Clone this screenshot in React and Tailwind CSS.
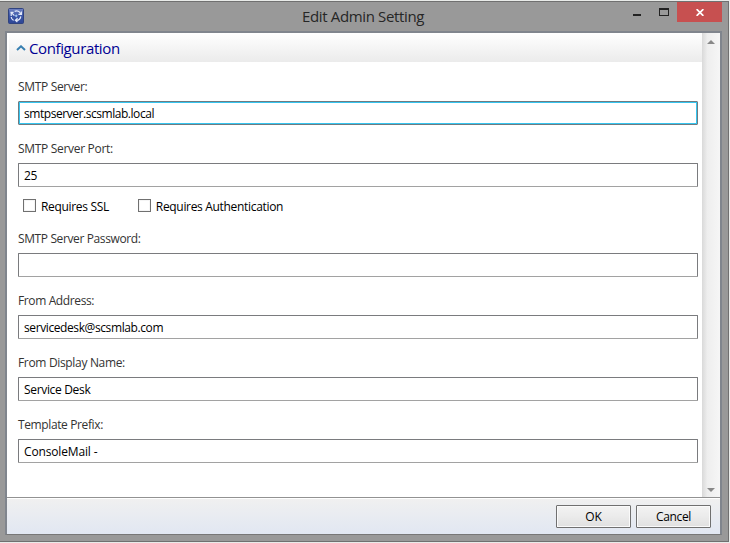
import React from "react";

function TextField({ label, value, focused, tracking = "", labelTracking = "" }) {
  return (
    <div className="h-[62px] pt-[16px]">
      <div className={`h-[23px] text-[12px] leading-[17px] text-[#333] ${labelTracking}`}>{label}</div>
      <div
        className={`flex h-[24px] items-center rounded-[1px] border bg-white pl-[5px] pt-px text-[12px] leading-[16px] text-black ${
          focused
            ? "border-[#6f7b80] shadow-[inset_0_0_0_1px_#35c5f0]"
            : "border-x-[#7a7b7e] border-t-[#7a7b7e] border-b-[#a2a2a2]"
        } ${tracking}`}
      >
        {value}
      </div>
    </div>
  );
}

function Checkbox({ label, tracking }) {
  return (
    <div className="flex items-start">
      <span className="h-[13px] w-[13px] border border-[#707070] bg-white shadow-[inset_0_0_0_1px_#f5f5f5]" />
      <span className={`ml-[5px] text-[12px] leading-[16px] text-black ${tracking}`}>{label}</span>
    </div>
  );
}

function Button({ children, tracking = "" }) {
  return (
    <div
      className={`flex h-[23px] w-[75px] items-center justify-center rounded-[1px] border border-[#707070] bg-linear-to-b from-[#f3f3f3] via-[#ebebeb] to-[#e0e0e0] text-[12px] leading-[16px] text-black shadow-[inset_0_0_0_1px_#fafafa] ${tracking}`}
    >
      {children}
    </div>
  );
}

function AppIcon() {
  return (
    <svg width="16" height="16" viewBox="0 0 16 16" className="shrink-0">
      <defs>
        <linearGradient id="tile" x1="0" y1="0" x2="0" y2="1">
          <stop offset="0" stopColor="#7183c2" />
          <stop offset="0.5" stopColor="#3b55a7" />
          <stop offset="1" stopColor="#2e4695" />
        </linearGradient>
      </defs>
      <rect x="0.5" y="0.5" width="15" height="15" rx="1" fill="url(#tile)" stroke="#30437f" />
      <g fill="none" stroke="#e3e9f8" strokeWidth="1.2">
        <path d="M3.2 8V4.4M2.4 4.4H5.6M3.4 4.6L6.4 7.6" />
        <path d="M6.6 3.4C9.4 2.2 11.6 3.4 12.6 5.8M13.4 3.4V6.4H10.4" />
        <path d="M12.8 8.4C12.4 11.2 10.4 12.6 7.6 12.2M9.6 10.2L7.4 12.2L9.4 14" />
        <path d="M3.2 9C3.4 10.8 4.2 11.8 5.6 12.4" />
      </g>
      <path d="M8.2 6.2l1.5 1.5L8.2 9.4L6.8 7.8z" fill="#9fc5ee" />
    </svg>
  );
}

export default function App() {
  return (
    <div className="flex h-[543px] w-[730px] flex-col overflow-hidden border-y border-r border-[#e9ebe9] bg-[#999] font-['Open_Sans','Noto_Sans',sans-serif]">
      <div className="flex h-[541px] flex-col border-y border-r border-[#707070] pl-[5px] pr-[6px]">
        <header className="flex h-[29px] shrink-0">
          <div className="pl-[3px] pt-[6px]">
            <AppIcon />
          </div>
          <div className="ml-[278px] w-[290px] whitespace-nowrap pt-[4px] text-[15px] leading-[21px] tracking-[-0.35px] text-[#262626]">
            Edit Admin Setting
          </div>
          <div className="ml-auto flex">
            <svg width="85" height="20" viewBox="0 0 85 20" shapeRendering="crispEdges">
              <rect x="41" y="12" width="8" height="2" fill="#222" />
              <path d="M67 6H77V14H67Z M68 8V13H76V8Z" fill="#222" fillRule="evenodd" />
            </svg>
            <div className="flex h-[20px] w-[45px] items-center justify-center bg-[#c75050] pl-px pt-px">
              <svg width="8" height="7" viewBox="0 0 8 7">
                <path d="M.6 .2L7.4 6.8M7.4 .2L.6 6.8" stroke="#fff" strokeWidth="1.8" />
              </svg>
            </div>
          </div>
        </header>

        <div className="flex h-[504px] flex-col border-2 border-b border-[#80858d] border-b-[#777]">
          <main className="flex h-[465px] shrink-0 border-b border-[#929292] bg-white">
            <div className="flex-1">
              <div className="ml-[2px] flex h-[29px] items-center bg-linear-to-b from-white to-[#ebebeb]">
                <svg width="10" height="6" viewBox="0 0 10 6" className="ml-[7px]">
                  <path d="M1 5L5 1.3L9 5" fill="none" stroke="#377fb1" strokeWidth="2" />
                </svg>
                <h1 className="ml-[3px] pt-px text-[15px] leading-[20px] tracking-[-0.38px] text-[#000093]">
                  Configuration
                </h1>
              </div>
              <div className="pl-[11px] pr-[4px]">
                <TextField
                  label="SMTP Server:"
                  labelTracking="tracking-[-0.33px]"
                  value="smtpserver.scsmlab.local"
                  tracking="tracking-[-0.45px]"
                  focused
                />
                <TextField label="SMTP Server Port:" labelTracking="tracking-[-0.31px]" value="25" tracking="tracking-[-0.3px]" />
                <div className="flex h-[28px] items-start gap-[29px] pl-[5px] pt-[13px]">
                  <Checkbox label="Requires SSL" tracking="tracking-[-0.33px]" />
                  <Checkbox label="Requires Authentication" tracking="tracking-[-0.32px]" />
                </div>
                <TextField label="SMTP Server Password:" labelTracking="tracking-[-0.38px]" value="" />
                <TextField
                  label="From Address:"
                  labelTracking="tracking-[-0.38px]"
                  value="servicedesk@scsmlab.com"
                  tracking="tracking-[-0.4px]"
                />
                <TextField
                  label="From Display Name:"
                  labelTracking="tracking-[-0.33px]"
                  value="Service Desk"
                  tracking="tracking-[-0.33px]"
                />
                <TextField
                  label="Template Prefix:"
                  labelTracking="tracking-[-0.38px]"
                  value="ConsoleMail -"
                  tracking="tracking-[-0.15px]"
                />
              </div>
            </div>
            <div className="flex w-[18px] flex-col items-center justify-between bg-linear-to-r from-[#d9d9d9] via-[#eee] via-30% to-[#f6f6f6] pb-[5px] pt-[7px]">
              <svg width="8" height="4" viewBox="0 0 8 4">
                <path d="M0 4L4 0L8 4Z" fill="#888" />
              </svg>
              <svg width="8" height="4" viewBox="0 0 8 4">
                <path d="M0 0L4 4L8 0Z" fill="#888" />
              </svg>
            </div>
          </main>
          <footer className="flex flex-1 items-start justify-end gap-[5px] border-t border-white bg-linear-to-b from-[#f0f0f0] to-[#e1e7f2] pr-[9px] pt-[6px]">
            <Button>OK</Button>
            <Button tracking="tracking-[-0.35px]">Cancel</Button>
          </footer>
        </div>
      </div>
    </div>
  );
}
